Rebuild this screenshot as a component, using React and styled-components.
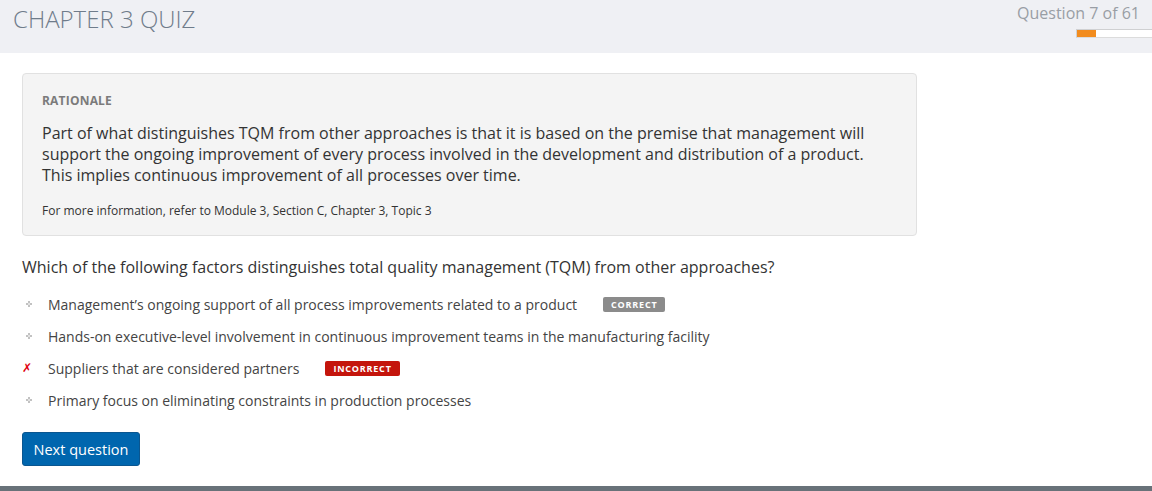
import React from "react";
import styled, { createGlobalStyle } from "styled-components";

const Global = createGlobalStyle`
  html, body { margin: 0; padding: 0; background: #fff; }
  body { font-family: "Open Sans", "Liberation Sans", sans-serif; color: #333; }
  * { box-sizing: border-box; }
`;

const Page = styled.div`
  display: flex;
  flex-direction: column;
  height: 100vh;
`;

const Header = styled.header`
  height: 53px;
  background: #eff0f4;
  display: flex;
  justify-content: space-between;
  align-items: flex-start;
  padding-left: 13px;
`;

const Title = styled.h1`
  margin: 2px 0 0;
  font-size: 24px;
  font-weight: 300;
  color: #6f7c8b;
  letter-spacing: 0;
`;

const Progress = styled.div`
  display: flex;
  flex-direction: column;
  align-items: flex-end;
  padding-top: 2px;
`;

const Counter = styled.div`
  font-size: 16px;
  color: #999ea5;
  padding-right: 12px;
`;

const Track = styled.div`
  margin-top: 5px;
  width: 76px;
  height: 9px;
  background: #fff;
  border-top: 1px solid #cfd0d2;
  border-left: 1px solid #cfd0d2;
  border-bottom: 1px solid #dcdcdc;
`;

const Fill = styled.div`
  height: 100%;
  background: #f28c1e;
`;

const Main = styled.main`
  flex: 1;
  padding: 20px 22px 0;
`;

const Rationale = styled.section`
  width: 895px;
  height: 163px;
  background: #f4f4f4;
  border: 1px solid #e1e1e1;
  border-radius: 4px;
  padding: 18px 19px 0;
`;

const Label = styled.div`
  font-size: 12px;
  font-weight: 700;
  color: #7b7b7b;
  letter-spacing: 0.2px;
`;

const Para = styled.p`
  margin: 14px 0 0;
  font-size: 16px;
  line-height: 21px;
  color: #333;
`;

const Ref = styled.p`
  margin: 16px 0 0;
  font-size: 12px;
  color: #333;
`;

const Question = styled.h2`
  margin: 20px 0 0;
  font-size: 16px;
  font-weight: 400;
  color: #333;
`;

const Options = styled.ul`
  list-style: none;
  margin: 10px 0 0;
  padding: 0;
  display: flex;
  flex-direction: column;
`;

const Option = styled.li`
  display: flex;
  align-items: center;
  height: 32px;
  font-size: 14px;
  color: #444;
`;

const Marker = styled.span`
  width: 26px;
  display: flex;
  align-items: center;
  padding-left: ${(p) => (p.$wrong ? "0" : "4px")};
  color: #e0000d;
  font-family: "DejaVu Sans", sans-serif;
  font-size: 12px;
  font-style: italic;
`;

const Badge = styled.span`
  margin-left: 26px;
  height: 15px;
  padding: 0 8px;
  display: inline-flex;
  align-items: center;
  border-radius: 2px;
  font-size: 9px;
  font-weight: 700;
  letter-spacing: 0.8px;
  color: #fff;
  background: ${(p) => (p.$wrong ? "#c4150c" : "#8b8b8b")};
`;

const Button = styled.button`
  margin-top: 16px;
  width: 118px;
  height: 34px;
  background: #0066ae;
  border: 1px solid #0a5690;
  border-radius: 3px;
  color: #fff;
  font-family: "Open Sans", sans-serif;
  font-size: 14.5px;
  font-weight: 500;
  cursor: pointer;
`;

const Footer = styled.footer`
  height: 5px;
  background: #687279;
`;

const Dot = () => (
  <svg width="6" height="6" viewBox="0 0 6 6">
    <rect x="2" y="0" width="2" height="2" fill="#c2c2c2" />
    <rect x="0" y="2" width="2" height="2" fill="#c2c2c2" />
    <rect x="4" y="2" width="2" height="2" fill="#c2c2c2" />
    <rect x="2" y="4" width="2" height="2" fill="#c2c2c2" />
    <rect x="2" y="2" width="2" height="2" fill="#e2e2e2" />
  </svg>
);

const options = [
  { text: "Management’s ongoing support of all process improvements related to a product", badge: "CORRECT" },
  { text: "Hands-on executive-level involvement in continuous improvement teams in the manufacturing facility" },
  { text: "Suppliers that are considered partners", badge: "INCORRECT", wrong: true },
  { text: "Primary focus on eliminating constraints in production processes" },
];

export default function App() {
  return (
    <Page>
      <Global />
      <Header>
        <Title>CHAPTER 3 QUIZ</Title>
        <Progress>
          <Counter>Question 7 of 61</Counter>
          <Track>
            <Fill style={{ width: `${(7 / 61) * 100 + 14}%` }} />
          </Track>
        </Progress>
      </Header>
      <Main>
        <Rationale>
          <Label>RATIONALE</Label>
          <Para>
            Part of what distinguishes TQM from other approaches is that it is based on the premise that management will
            support the ongoing improvement of every process involved in the development and distribution of a product.
            This implies continuous improvement of all processes over time.
          </Para>
          <Ref>For more information, refer to Module 3, Section C, Chapter 3, Topic 3</Ref>
        </Rationale>
        <Question>
          Which of the following factors distinguishes total quality management (TQM) from other approaches?
        </Question>
        <Options>
          {options.map((o) => (
            <Option key={o.text}>
              <Marker $wrong={o.wrong}>{o.wrong ? "✗" : <Dot />}</Marker>
              {o.text}
              {o.badge && <Badge $wrong={o.wrong}>{o.badge}</Badge>}
            </Option>
          ))}
        </Options>
        <Button>Next question</Button>
      </Main>
      <Footer />
    </Page>
  );
}
